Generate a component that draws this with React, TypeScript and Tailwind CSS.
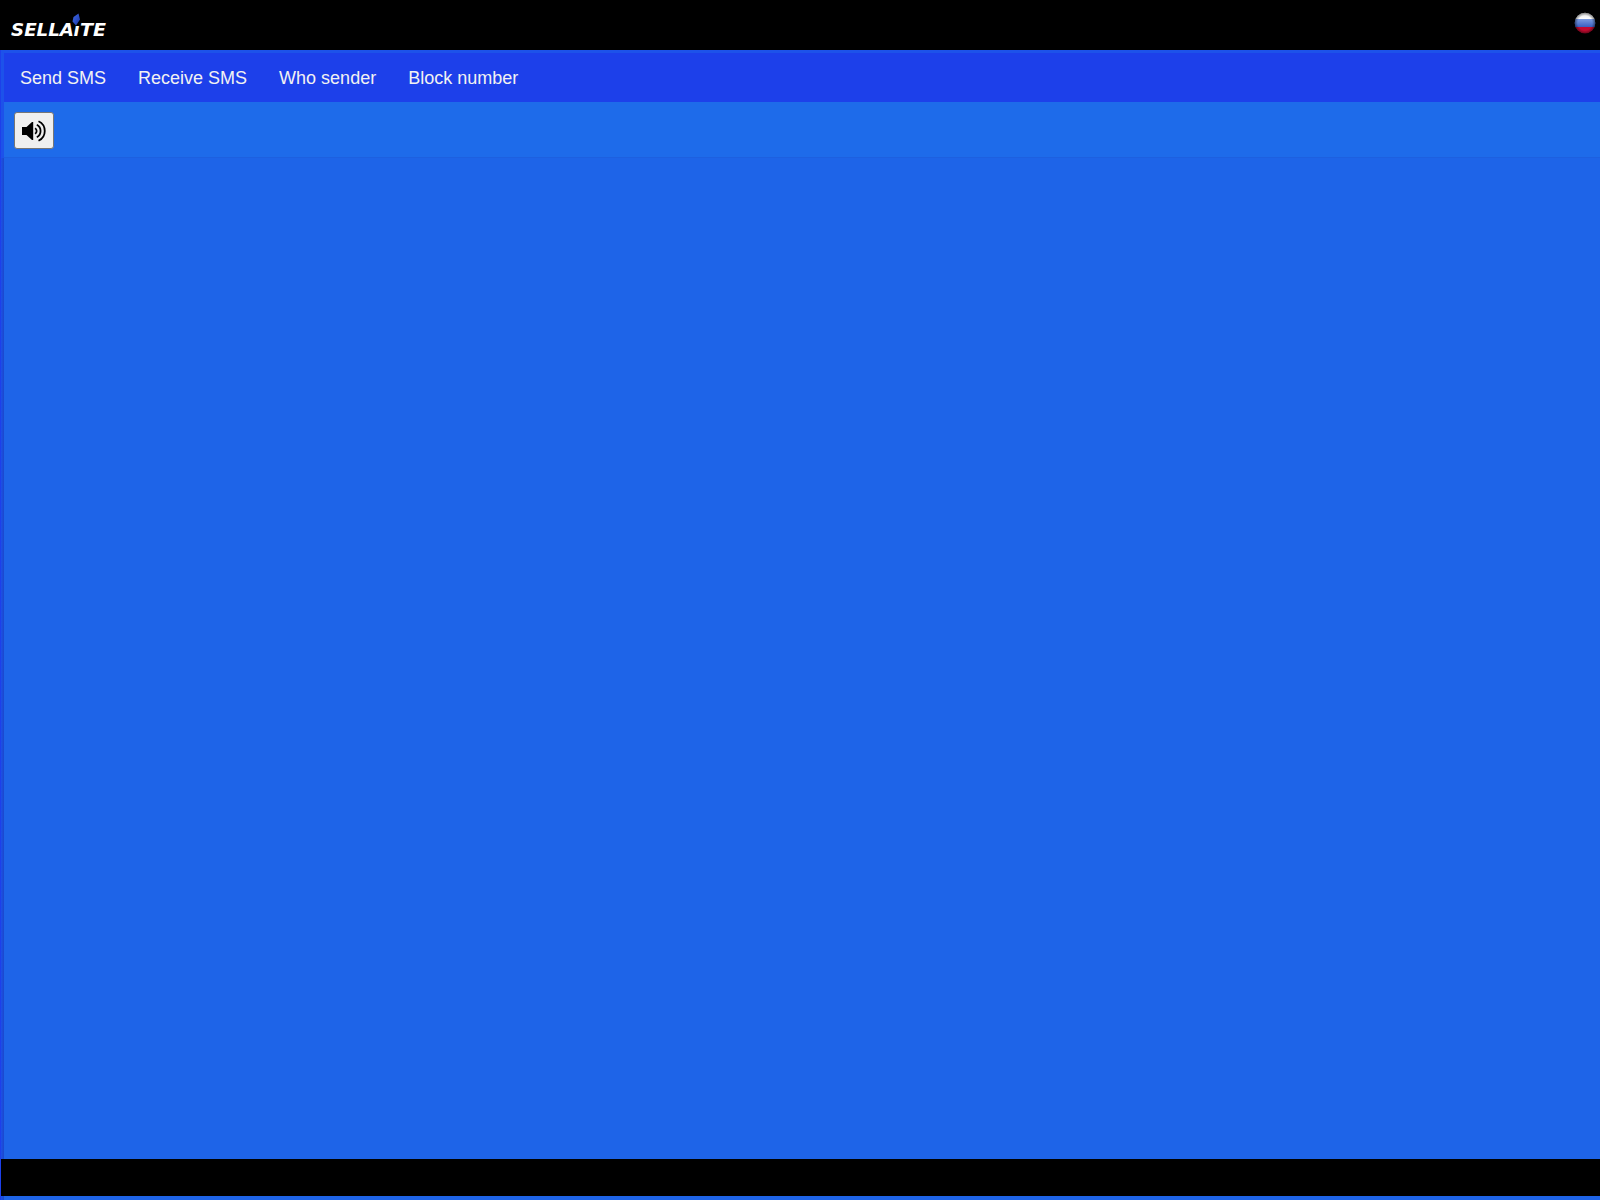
const links = ["Send SMS", "Receive SMS", "Who sender", "Block number"];

function Logo() {
  return (
    <svg width="98" height="28" viewBox="0 0 98 28" className="ml-[10px] mt-3" role="img" aria-label="Sellaite">
      <defs>
        <linearGradient id="gem" x1="0" y1="0" x2="1" y2="1">
          <stop offset="0" stopColor="#3f66dc" />
          <stop offset="0.5" stopColor="#2c4fc8" />
          <stop offset="1" stopColor="#1c339a" />
        </linearGradient>
      </defs>
      <g fill="#fff" fontFamily="DejaVu Sans" fontWeight="700" fontStyle="italic" fontSize="17.5">
        <text x="1" y="23.5" textLength="63" lengthAdjust="spacingAndGlyphs">SELLA</text>
        <text x="63.5" y="23.5" textLength="6" lengthAdjust="spacingAndGlyphs">ı</text>
        <text x="70" y="23.5" textLength="26" lengthAdjust="spacingAndGlyphs">TE</text>
      </g>
      <path d="M68.5 1.5L70 7.5L66 13.5L62.5 9.5L63.5 5Z" fill="url(#gem)" />
    </svg>
  );
}

function RussianFlag() {
  return (
    <svg width="22" height="22" viewBox="0 0 22 22" className="mr-1 mt-3">
      <defs>
        <clipPath id="disc">
          <circle cx="11" cy="11" r="10.3" />
        </clipPath>
        <linearGradient id="white" x1="0" y1="0" x2="0" y2="1">
          <stop offset="0" stopColor="#e4e4e4" />
          <stop offset="1" stopColor="#ffffff" />
        </linearGradient>
        <linearGradient id="blue" x1="0" y1="0" x2="0" y2="1">
          <stop offset="0" stopColor="#7b9be0" />
          <stop offset="1" stopColor="#3a5fc0" />
        </linearGradient>
        <radialGradient id="shade">
          <stop offset="0.7" stopColor="#000" stopOpacity="0" />
          <stop offset="1" stopColor="#000" stopOpacity="0.45" />
        </radialGradient>
      </defs>
      <g clipPath="url(#disc)">
        <rect width="22" height="7" fill="url(#white)" />
        <rect y="7" width="22" height="8" fill="url(#blue)" />
        <rect y="15" width="22" height="7" fill="#c40a30" />
        <circle cx="11" cy="11" r="10.3" fill="url(#shade)" />
      </g>
    </svg>
  );
}

function SpeakerIcon() {
  return (
    <svg width="26" height="22" viewBox="0 0 26 22" fill="none" stroke="#000" strokeWidth="1.8">
      <path d="M1 7h4.5L11 2h1.2v18H11l-5.500-5H1z" fill="#000" stroke="none" />
      <path d="M14 8.200a3.200 3.200 0 0 1 0 5.600" />
      <path d="M15.800 4.800a7 7 0 0 1 0 12.400" />
      <path d="M17.500 1.200a10.800 10.800 0 0 1 0 19.600" />
    </svg>
  );
}

export default function App() {
  return (
    <div className="flex h-screen flex-col overflow-hidden bg-[#1e64e8] font-['Liberation_Sans',Arial,sans-serif]">
      <header className="flex h-[50px] shrink-0 items-start justify-between bg-black">
        <Logo />
        <RussianFlag />
      </header>
      <div className="flex min-h-0 flex-1">
        <div className="w-px shrink-0 bg-[#1d40ea]" />
        <div className="flex min-w-0 flex-1 flex-col">
          <div className="flex min-h-0 flex-1">
            <div className="flex w-[3px] shrink-0 flex-col">
              <div className="h-[108px] bg-[#1d52ea]" />
              <div className="flex-1 bg-linear-to-r from-[#1d50e8] to-[#1b48cc]" />
            </div>
            <div className="flex min-w-0 flex-1 flex-col">
              <nav className="flex h-[52px] shrink-0 items-center gap-8 border-t-[3px] border-[#1d52ea] bg-[#1d40ea] px-4 text-lg text-[#f2f2f2]">
                {links.map((link) => (
                  <a key={link} href="#" className="whitespace-nowrap">
                    {link}
                  </a>
                ))}
              </nav>
              <div className="h-[55px] shrink-0 bg-[#1e6bea] px-[10px] pt-[10px]">
                <button className="flex h-[37px] w-10 items-center justify-center rounded-[3px] border border-[#767676] bg-[#efefef]">
                  <SpeakerIcon />
                </button>
              </div>
              <main className="flex-1 border-t border-[#1d60e0]" />
            </div>
          </div>
          <footer className="h-[37px] shrink-0 bg-black" />
          <div className="flex h-1 shrink-0">
            <div className="w-[3px] bg-linear-to-r from-[#1d50e8] to-[#1b48cc]" />
          </div>
        </div>
      </div>
    </div>
  );
}
